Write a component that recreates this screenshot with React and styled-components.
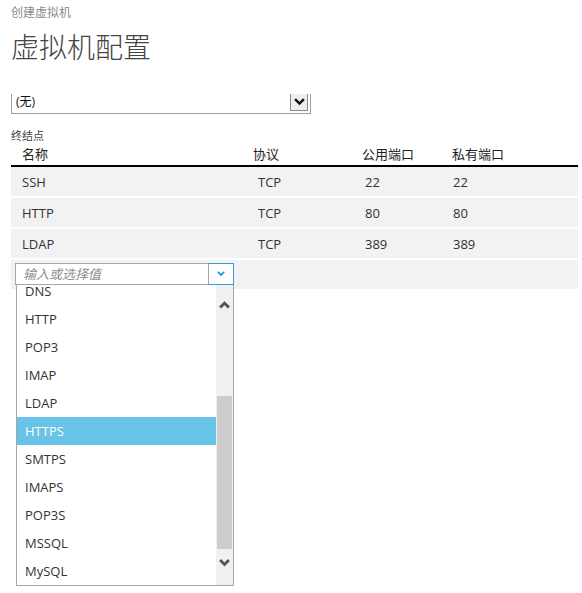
import styled, { createGlobalStyle } from "styled-components";

const GlobalStyle = createGlobalStyle`
  html, body {
    margin: 0;
    padding: 0;
    background: #fff;
  }
  body {
    font-family: "Open Sans", "Noto Sans CJK SC", sans-serif;
    color: #333;
  }
`;

const endpoints = [
  { name: "SSH", protocol: "TCP", pub: "22", priv: "22" },
  { name: "HTTP", protocol: "TCP", pub: "80", priv: "80" },
  { name: "LDAP", protocol: "TCP", pub: "389", priv: "389" },
];

const options = [
  "DNS",
  "HTTP",
  "POP3",
  "IMAP",
  "LDAP",
  "HTTPS",
  "SMTPS",
  "IMAPS",
  "POP3S",
  "MSSQL",
  "MySQL",
];

const Chevron = ({ up, size = 10, color = "#555", stroke = 2.4 }) => (
  <svg width={size} height={size * 0.7} viewBox="0 0 10 7">
    <path
      d={up ? "M1 6 L5 2 L9 6" : "M1 1 L5 5 L9 1"}
      fill="none"
      stroke={color}
      strokeWidth={stroke}
    />
  </svg>
);

const App = () => {
  return (
    <Page>
      <GlobalStyle />
      <Crumb>创建虚拟机</Crumb>
      <Title>虚拟机配置</Title>

      <SelectBox>
        <SelectText>(无)</SelectText>
        <SelectButton>
          <Chevron size={11} color="#111" stroke={2.2} />
        </SelectButton>
      </SelectBox>

      <SectionLabel>终结点</SectionLabel>
      <Table>
        <HeadRow>
          <HeadCell>名称</HeadCell>
          <HeadCell>协议</HeadCell>
          <HeadCell>公用端口</HeadCell>
          <HeadCell>私有端口</HeadCell>
        </HeadRow>
        {endpoints.map((e) => (
          <Row key={e.name}>
            <Cell>{e.name}</Cell>
            <Cell $indent={5}>{e.protocol}</Cell>
            <Cell $indent={3}>{e.pub}</Cell>
            <Cell $indent={1}>{e.priv}</Cell>
          </Row>
        ))}
        <InputRow>
          <Combo>
            <ComboInput>输入或选择值</ComboInput>
            <ComboButton>
              <Chevron size={8} color="#1ba1e2" stroke={2.2} />
            </ComboButton>
            <Dropdown>
              <OptionList>
                <Options>
                  {options.map((o) => (
                    <Option key={o} $active={o === "HTTPS"}>
                      {o}
                    </Option>
                  ))}
                </Options>
              </OptionList>
              <Scrollbar>
                <ScrollUp>
                  <Chevron up size={11} color="#555" stroke={2.6} />
                </ScrollUp>
                <Track>
                  <Thumb />
                </Track>
                <ScrollDown>
                  <Chevron size={11} color="#555" stroke={2.6} />
                </ScrollDown>
              </Scrollbar>
            </Dropdown>
          </Combo>
        </InputRow>
      </Table>
    </Page>
  );
};

export default App;

// style
const Page = styled.div`
  width: 582px;
  height: 593px;
  padding: 0 4px 0 11px;
  box-sizing: border-box;
  overflow: hidden;
`;
const Crumb = styled.div`
  padding-top: 4px;
  height: 17px;
  font-size: 12px;
  line-height: 17px;
  color: #8a8a8a;
`;
const Title = styled.h1`
  margin: 9px 0 0;
  font-size: 28px;
  line-height: 34px;
  font-weight: 300;
  color: #444;
`;
const SelectBox = styled.div`
  margin-top: 30px;
  width: 300px;
  height: 20px;
  box-sizing: border-box;
  border: 1px solid #a0a0a0;
  border-top: none;
  display: flex;
  align-items: flex-start;
  justify-content: space-between;
`;
const SelectText = styled.span`
  padding: 0 0 0 4px;
  font-size: 12px;
  line-height: 15px;
  color: #111;
`;
const SelectButton = styled.span`
  margin-right: 2px;
  width: 18px;
  height: 17px;
  box-sizing: border-box;
  border: 1px solid #8a8a8a;
  border-top: none;
  background: #eeeeee;
  display: flex;
  align-items: center;
  justify-content: center;
`;
const SectionLabel = styled.div`
  margin-top: 15px;
  font-size: 11px;
  line-height: 14px;
  color: #444;
`;
const Table = styled.div`
  width: 567px;
`;
const grid = `
  display: grid;
  grid-template-columns: 231px 109px 90px 1fr;
  padding-left: 11px;
  align-items: center;
`;
const HeadRow = styled.div`
  ${grid}
  height: 22px;
  border-bottom: 2px solid #000;
  box-sizing: content-box;
`;
const HeadCell = styled.span`
  font-size: 13px;
  line-height: 18px;
  color: #222;
`;
const Row = styled.div`
  ${grid}
  height: 29px;
  margin-bottom: 2px;
  background: #f2f2f2;
`;
const Cell = styled.span`
  padding-left: ${({ $indent }) => $indent || 0}px;
  font-size: 13px;
  color: #333;
`;
const InputRow = styled.div`
  height: 29px;
  padding: 3px 0 0 4px;
  box-sizing: border-box;
  background: #f2f2f2;
`;
const Combo = styled.div`
  position: relative;
  width: 219px;
  height: 22px;
  display: flex;
`;
const ComboInput = styled.div`
  flex: 1;
  box-sizing: border-box;
  border: 1px solid #a6a6a6;
  border-right: none;
  background: #fff;
  padding-left: 7px;
  font-size: 13px;
  line-height: 20px;
  font-style: italic;
  color: #8d8d8d;
`;
const ComboButton = styled.div`
  width: 26px;
  box-sizing: border-box;
  border: 1px solid #2d9fd9;
  border-left: 1px solid #a6a6a6;
  background: #fff;
  display: flex;
  align-items: center;
  justify-content: center;
`;
const Dropdown = styled.div`
  position: absolute;
  top: 22px;
  left: 1px;
  width: 218px;
  height: 301px;
  box-sizing: border-box;
  border: 1px solid #a6a6a6;
  border-top: none;
  background: #fff;
  display: flex;
  z-index: 5;
`;
const OptionList = styled.div`
  flex: 1;
  overflow: hidden;
`;
const Options = styled.div`
  margin-top: -8px;
`;
const Option = styled.div`
  height: 28px;
  padding-left: 8px;
  font-size: 13px;
  line-height: 28px;
  color: ${({ $active }) => ($active ? "#fff" : "#333")};
  background: ${({ $active }) => ($active ? "#68c3e9" : "transparent")};
`;
const Scrollbar = styled.div`
  width: 17px;
  background: #f0f0f0;
  display: flex;
  flex-direction: column;
`;
const ScrollUp = styled.div`
  height: 40px;
  display: flex;
  align-items: center;
  justify-content: center;
`;
const Track = styled.div`
  flex: 1;
  padding-top: 71px;
`;
const Thumb = styled.div`
  height: 153px;
  margin: 0 1px;
  background: #cdcdcd;
`;
const ScrollDown = styled.div`
  height: 26px;
  margin-bottom: 9px;
  display: flex;
  align-items: center;
  justify-content: center;
`;
